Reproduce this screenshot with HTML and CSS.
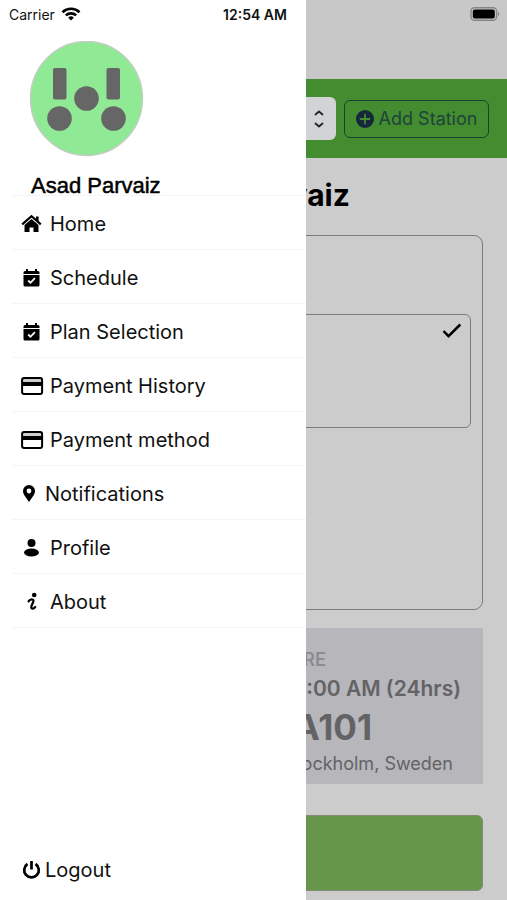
FILE: index.html
```html
<!DOCTYPE html>
<html lang="en">
<head>
<meta charset="utf-8">
<meta name="viewport" content="width=device-width, initial-scale=1">
<title>Stations</title>
<link rel="stylesheet" href="styles.css">
</head>
<body>
<header class="status">
  <div class="carrier">Carrier
    <svg width="20" height="14" viewBox="0 0 20 14" fill="none" stroke="#000" stroke-width="2.6"><path d="M1.5 5.2a12.3 12.3 0 0 1 17 0M4.8 8.4a7.6 7.6 0 0 1 10.4 0"/><path d="M10 13.5 7.2 10.7a4 4 0 0 1 5.6 0z" fill="#000" stroke="none"/></svg>
  </div>
  <div class="clock">12:54 AM</div>
  <svg class="battery" width="31" height="14" viewBox="0 0 31 14"><rect x="1" y=".7" width="25.6" height="12.6" rx="3.5" fill="none" stroke="#858585" stroke-width="1.4"/><rect x="2.8" y="2.4" width="22" height="9.2" rx="2" fill="#000"/><path d="M28 4.6q2.6 2.4 0 4.8z" fill="#858585"/></svg>
</header>

<main class="page">
  <div class="toolbar">
    <div class="picker">
      <select aria-label="Station"><option></option></select>
      <svg width="12" height="20" viewBox="0 0 12 20" fill="none" stroke="#222" stroke-width="1.8" stroke-linecap="round" stroke-linejoin="round"><path d="m2.5 5.5 3.5-3 3.5 3M2.5 14.5l3.5 3 3.5-3"/></svg>
    </div>
    <button class="add" type="button">
      <svg width="18" height="18" viewBox="0 0 18 18"><circle cx="9" cy="9" r="9" fill="#17273b"/><path d="M9 4.5v9M4.5 9h9" stroke="#448c30" stroke-width="1.8" stroke-linecap="round"/></svg>
      Add Station
    </button>
  </div>
  <div class="content">
    <h1>Asad Parvaiz</h1>
    <section class="panel">
      <div class="choice">
        <svg width="20" height="16" viewBox="0 0 20 16" fill="none" stroke="#000" stroke-width="2.5"><path d="m1.5 8 5 5.2L18.3 1.5"/></svg>
      </div>
    </section>
    <section class="info">
      <div class="label">STORE</div>
      <div class="hours">8:00 AM (24hrs)</div>
      <div class="code">A101</div>
      <div class="city">Stockholm, Sweden</div>
    </section>
    <button class="primary" type="button" aria-label="Continue"></button>
  </div>
</main>

<aside class="drawer">
  <svg class="avatar" width="114" height="116" viewBox="0 0 114 116">
    <ellipse cx="56.500" cy="57.500" rx="56" ry="57" fill="#90e994" stroke="#c4ccc4" stroke-width="1.4"/>
    <g fill="#666"><rect x="23" y="27" width="13.500" height="31.500" rx="2"/><rect x="76.500" y="27" width="13.500" height="31.500" rx="2"/><circle cx="56.500" cy="57.500" r="12.3"/><circle cx="29.500" cy="77.500" r="12.3"/><circle cx="83.500" cy="77.500" r="12.3"/></g>
  </svg>
  <div class="name">Asad Parvaiz</div>
  <nav class="menu">
    <a href="#"><svg width="24" height="20" viewBox="0 0 24 20"><path d="M1.2 10.3 10.5 2.2 19.8 10.3" fill="none" stroke="#000" stroke-width="2.2"/><path d="M15 2.5h2.6v5L15 5z"/><path d="m10.5 5 7 6.1V18h-5v-4.6h-4V18h-5v-6.9z"/></svg>Home</a>
    <a href="#"><svg width="24" height="20" viewBox="0 0 24 20"><path d="M5 1h2v2h7V1h2v2h1q1.5 0 1.5 1.5V6h-16V4.5Q2.5 3 4 3h1zM2.5 7h16v10q0 1.5-1.5 1.5H4q-1.5 0-1.5-1.5z"/><path d="m7.2 12.5 2.3 2.3 4.4-4.6" fill="none" stroke="#fff" stroke-width="1.8"/></svg>Schedule</a>
    <a href="#"><svg width="24" height="20" viewBox="0 0 24 20"><path d="M5 1h2v2h7V1h2v2h1q1.5 0 1.5 1.5V6h-16V4.5Q2.5 3 4 3h1zM2.5 7h16v10q0 1.5-1.5 1.5H4q-1.5 0-1.5-1.5z"/><path d="m7.2 12.5 2.3 2.3 4.4-4.6" fill="none" stroke="#fff" stroke-width="1.8"/></svg>Plan Selection</a>
    <a href="#"><svg width="24" height="20" viewBox="0 0 24 20"><path d="M2 3h18v3H2z" fill="#ccc"/><path d="M1 6h20v4H1z"/><rect x="1.1" y="2" width="20" height="16" rx="2" fill="none" stroke="#000" stroke-width="2"/></svg>Payment History</a>
    <a href="#"><svg width="24" height="20" viewBox="0 0 24 20"><path d="M2 3h18v3H2z" fill="#ccc"/><path d="M1 6h20v4H1z"/><rect x="1.1" y="2" width="20" height="16" rx="2" fill="none" stroke="#000" stroke-width="2"/></svg>Payment method</a>
    <a href="#"><svg width="19" height="20" viewBox="0 0 19 20"><path fill-rule="evenodd" d="M8 1a6 6 0 0 1 6 6c0 3-2 5-6 11C4 12 2 10 2 7a6 6 0 0 1 6-6zm0 3.600a2.400 2.400 0 1 0 0 4.800 2.400 2.400 0 0 0 0-4.800z"/></svg>Notifications</a>
    <a href="#"><svg width="24" height="20" viewBox="0 0 24 20"><circle cx="10.5" cy="5" r="4"/><ellipse cx="10.5" cy="14.5" rx="7.5" ry="4"/></svg>Profile</a>
    <a href="#"><svg width="24" height="20" viewBox="0 0 24 20"><circle cx="13.2" cy="3" r="2.3"/><path d="M7.5 9.3q1.3-2 3.2-2 2.5.2 1.6 2.5L10.500 14q-.8 2.400 1 2.700 1.700 0 2.700-1.700" fill="none" stroke="#000" stroke-width="2.2" stroke-linecap="round"/></svg>About</a>
  </nav>
  <button class="logout" type="button"><svg width="19" height="20" viewBox="0 0 19 20" fill="none" stroke="#000" stroke-width="2.7"><path d="M5.5 4a7.300 7.300 0 1 0 8 0"/><path d="M9.5 1v8.500"/></svg>Logout</button>
</aside>
</body>
</html>
```
FILE: styles.css
```css
* { box-sizing: border-box; }

body {
  margin: 0;
  position: relative;
  min-height: 100vh;
  background: #ccc;
  color: #111;
  font-family: Inter, "Liberation Sans", sans-serif;
}

button { font: inherit; color: inherit; }

/* System bar, drawn above the drawer */
.status {
  position: absolute;
  inset: 0 0 auto 0;
  z-index: 3;
  height: 28px;
  padding: 0 6px 0 9px;
  display: grid;
  grid-template-columns: 1fr auto 1fr;
  align-items: center;
  font-size: 14px;
}
.carrier { display: flex; align-items: center; gap: 6px; }
.clock { font-weight: 600; }
.battery { justify-self: end; }

/* Page */
.page { padding-top: 79px; background: linear-gradient(#c8c8c8 79px, #ccc 79px); }
.toolbar {
  height: 79px;
  padding: 0 18px 0 24px;
  display: flex;
  align-items: center;
  gap: 8px;
  background: #448c30;
}
.picker { flex: 1; display: grid; align-items: center; }
.picker > * { grid-area: 1 / 1; }
.picker select {
  appearance: none;
  width: 100%;
  height: 43px;
  border: 0;
  border-radius: 6px;
  background: #d2d3d4;
}
.picker svg { justify-self: end; margin-right: 11px; pointer-events: none; }
.add {
  height: 38px;
  width: 145px;
  padding: 0;
  display: flex;
  align-items: center;
  justify-content: center;
  gap: 5px;
  border: 1px solid #1c4030;
  border-radius: 6px;
  background: none;
  color: #20433a;
  font-size: 18px;
  white-space: nowrap;
}

.content { padding: 19px 24px 8px 25px; }
h1 {
  margin: 0 0 22px;
  font-size: 30px;
  line-height: 36px;
  font-weight: 700;
  text-align: center;
  color: #000;
}
.panel {
  height: 375px;
  padding: 78px 11px;
  border: 1px solid #7c7c7c;
  border-radius: 9px;
}
.choice {
  height: 114px;
  padding: 8px;
  display: flex;
  justify-content: flex-end;
  border: 1px solid #7c7c7c;
  border-radius: 6px;
}
.info {
  margin: 18px 0 31px;
  height: 156px;
  padding: 19px 0;
  background: #b6b6bb;
  text-align: right;
  color: #636366;
}
.label { padding-right: 157px; font-size: 18px; line-height: 26px; font-weight: 600; color: #8c8c90; }
.hours { padding-right: 22px; font-size: 21px; line-height: 32px; font-weight: 600; }
.code { padding-right: 111px; font-size: 35px; line-height: 44px; font-weight: 700; }
.city { padding-right: 30px; font-size: 18px; line-height: 30px; }
.primary {
  display: block;
  width: 100%;
  height: 76px;
  border: 1px solid #7f8a79;
  border-radius: 6px;
  background: #66964a;
}

/* Drawer */
.drawer {
  position: absolute;
  inset: 0 auto 0 0;
  z-index: 2;
  width: 306px;
  padding: 41px 0 18px;
  display: flex;
  flex-direction: column;
  background: #fff;
}
.avatar { margin-left: 30px; flex: none; }
.name {
  margin-top: 17px;
  padding-left: 31px;
  height: 21px;
  font: 22px/24px "Liberation Sans", sans-serif;
  -webkit-text-stroke: 0.5px #000;
  color: #000;
}
.menu { margin-left: 12px; border-top: 1px solid #f5f5f5; }
.menu a {
  height: 54px;
  padding: 2px 0 0 9px;
  display: flex;
  align-items: center;
  gap: 5px;
  border-bottom: 1px solid #f5f5f5;
  font-size: 20px;
  color: #111;
  text-decoration: none;
}
.logout {
  margin-top: auto;
  padding: 0 0 0 22px;
  display: flex;
  align-items: center;
  gap: 4px;
  border: 0;
  background: none;
  font-size: 20px;
  line-height: 24px;
}
```
